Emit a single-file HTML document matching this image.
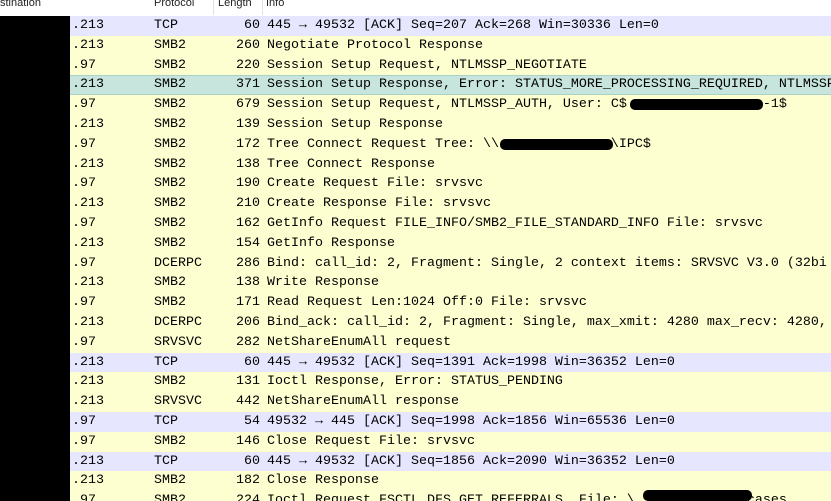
<!DOCTYPE html>
<html style="width:831px;height:501px;overflow:hidden"><head><meta charset="utf-8"><style>
body{margin:0;width:831px;height:501px;overflow:hidden;background:#fff;position:relative;font-family:"Liberation Mono",monospace;}
.hdr{position:absolute;left:0;top:0;width:831px;height:16px;background:#fff;font:11px "Liberation Sans",sans-serif;color:#222;overflow:hidden}
.hdr span{position:absolute;top:-3px;line-height:12px;}
.sep{position:absolute;top:0;width:1px;height:15px;background:#e0e0e0;}
.row{position:absolute;left:0;width:831px;height:19.8px;font-size:13.33px;line-height:19.8px;color:#000;white-space:pre;overflow:hidden}
.row span{position:absolute;top:0;}
.d{left:72px}.p{left:154px}.l{right:571px;text-align:right}.i{left:267px}
.t{background:#e7e6ff}.s{background:#feffd0}.h{background:#c7e5dd;border-top:1px solid #a8d4c8;border-bottom:1px solid #a8d4c8;box-sizing:border-box;line-height:18px}
.blk{position:absolute;background:#000;}
</style></head><body>
<div class="hdr"><span style="left:0">stination</span><span style="left:154px">Protocol</span><div class="sep" style="left:213px"></div><span style="left:218px">Length</span><div class="sep" style="left:262px"></div><span style="left:266px">Info</span></div>
<div class="row t" style="top:16px"><span class="d">.213</span><span class="p">TCP</span><span class="l">60</span><span class="i">445 → 49532 [ACK] Seq=207 Ack=268 Win=30336 Len=0</span></div>
<div class="row s" style="top:35.8px"><span class="d">.213</span><span class="p">SMB2</span><span class="l">260</span><span class="i">Negotiate Protocol Response</span></div>
<div class="row s" style="top:55.6px"><span class="d">.97</span><span class="p">SMB2</span><span class="l">220</span><span class="i">Session Setup Request, NTLMSSP_NEGOTIATE</span></div>
<div class="row h" style="top:75.4px"><span class="d">.213</span><span class="p">SMB2</span><span class="l">371</span><span class="i">Session Setup Response, Error: STATUS_MORE_PROCESSING_REQUIRED, NTLMSSP</span></div>
<div class="row s" style="top:95.2px"><span class="d">.97</span><span class="p">SMB2</span><span class="l">679</span><span class="i">Session Setup Request, NTLMSSP_AUTH, User: C$                 -1$</span></div>
<div class="row s" style="top:115px"><span class="d">.213</span><span class="p">SMB2</span><span class="l">139</span><span class="i">Session Setup Response</span></div>
<div class="row s" style="top:134.8px"><span class="d">.97</span><span class="p">SMB2</span><span class="l">172</span><span class="i">Tree Connect Request Tree: \\              \IPC$</span></div>
<div class="row s" style="top:154.6px"><span class="d">.213</span><span class="p">SMB2</span><span class="l">138</span><span class="i">Tree Connect Response</span></div>
<div class="row s" style="top:174.4px"><span class="d">.97</span><span class="p">SMB2</span><span class="l">190</span><span class="i">Create Request File: srvsvc</span></div>
<div class="row s" style="top:194.2px"><span class="d">.213</span><span class="p">SMB2</span><span class="l">210</span><span class="i">Create Response File: srvsvc</span></div>
<div class="row s" style="top:214px"><span class="d">.97</span><span class="p">SMB2</span><span class="l">162</span><span class="i">GetInfo Request FILE_INFO/SMB2_FILE_STANDARD_INFO File: srvsvc</span></div>
<div class="row s" style="top:233.8px"><span class="d">.213</span><span class="p">SMB2</span><span class="l">154</span><span class="i">GetInfo Response</span></div>
<div class="row s" style="top:253.6px"><span class="d">.97</span><span class="p">DCERPC</span><span class="l">286</span><span class="i">Bind: call_id: 2, Fragment: Single, 2 context items: SRVSVC V3.0 (32bi</span></div>
<div class="row s" style="top:273.4px"><span class="d">.213</span><span class="p">SMB2</span><span class="l">138</span><span class="i">Write Response</span></div>
<div class="row s" style="top:293.2px"><span class="d">.97</span><span class="p">SMB2</span><span class="l">171</span><span class="i">Read Request Len:1024 Off:0 File: srvsvc</span></div>
<div class="row s" style="top:313px"><span class="d">.213</span><span class="p">DCERPC</span><span class="l">206</span><span class="i">Bind_ack: call_id: 2, Fragment: Single, max_xmit: 4280 max_recv: 4280,</span></div>
<div class="row s" style="top:332.8px"><span class="d">.97</span><span class="p">SRVSVC</span><span class="l">282</span><span class="i">NetShareEnumAll request</span></div>
<div class="row t" style="top:352.6px"><span class="d">.213</span><span class="p">TCP</span><span class="l">60</span><span class="i">445 → 49532 [ACK] Seq=1391 Ack=1998 Win=36352 Len=0</span></div>
<div class="row s" style="top:372.4px"><span class="d">.213</span><span class="p">SMB2</span><span class="l">131</span><span class="i">Ioctl Response, Error: STATUS_PENDING</span></div>
<div class="row s" style="top:392.2px"><span class="d">.213</span><span class="p">SRVSVC</span><span class="l">442</span><span class="i">NetShareEnumAll response</span></div>
<div class="row t" style="top:412px"><span class="d">.97</span><span class="p">TCP</span><span class="l">54</span><span class="i">49532 → 445 [ACK] Seq=1998 Ack=1856 Win=65536 Len=0</span></div>
<div class="row s" style="top:431.8px"><span class="d">.97</span><span class="p">SMB2</span><span class="l">146</span><span class="i">Close Request File: srvsvc</span></div>
<div class="row t" style="top:451.6px"><span class="d">.213</span><span class="p">TCP</span><span class="l">60</span><span class="i">445 → 49532 [ACK] Seq=1856 Ack=2090 Win=36352 Len=0</span></div>
<div class="row s" style="top:471.4px"><span class="d">.213</span><span class="p">SMB2</span><span class="l">182</span><span class="i">Close Response</span></div>
<div class="row s" style="top:491.2px;height:9.8px"><span class="d">.97</span><span class="p">SMB2</span><span class="l">224</span><span class="i">Ioctl Request FSCTL_DFS_GET_REFERRALS, File: \             \cases</span></div>
<div class="blk" style="left:0;top:16px;width:70px;height:485px"></div>
<div class="blk" style="left:630px;top:99px;width:133px;height:11px;border-radius:5px"></div>
<div class="blk" style="left:500px;top:139px;width:113px;height:11px;border-radius:5px"></div>
<div class="blk" style="left:643px;top:490px;width:109px;height:11px;border-radius:5px"></div>
</body></html>
